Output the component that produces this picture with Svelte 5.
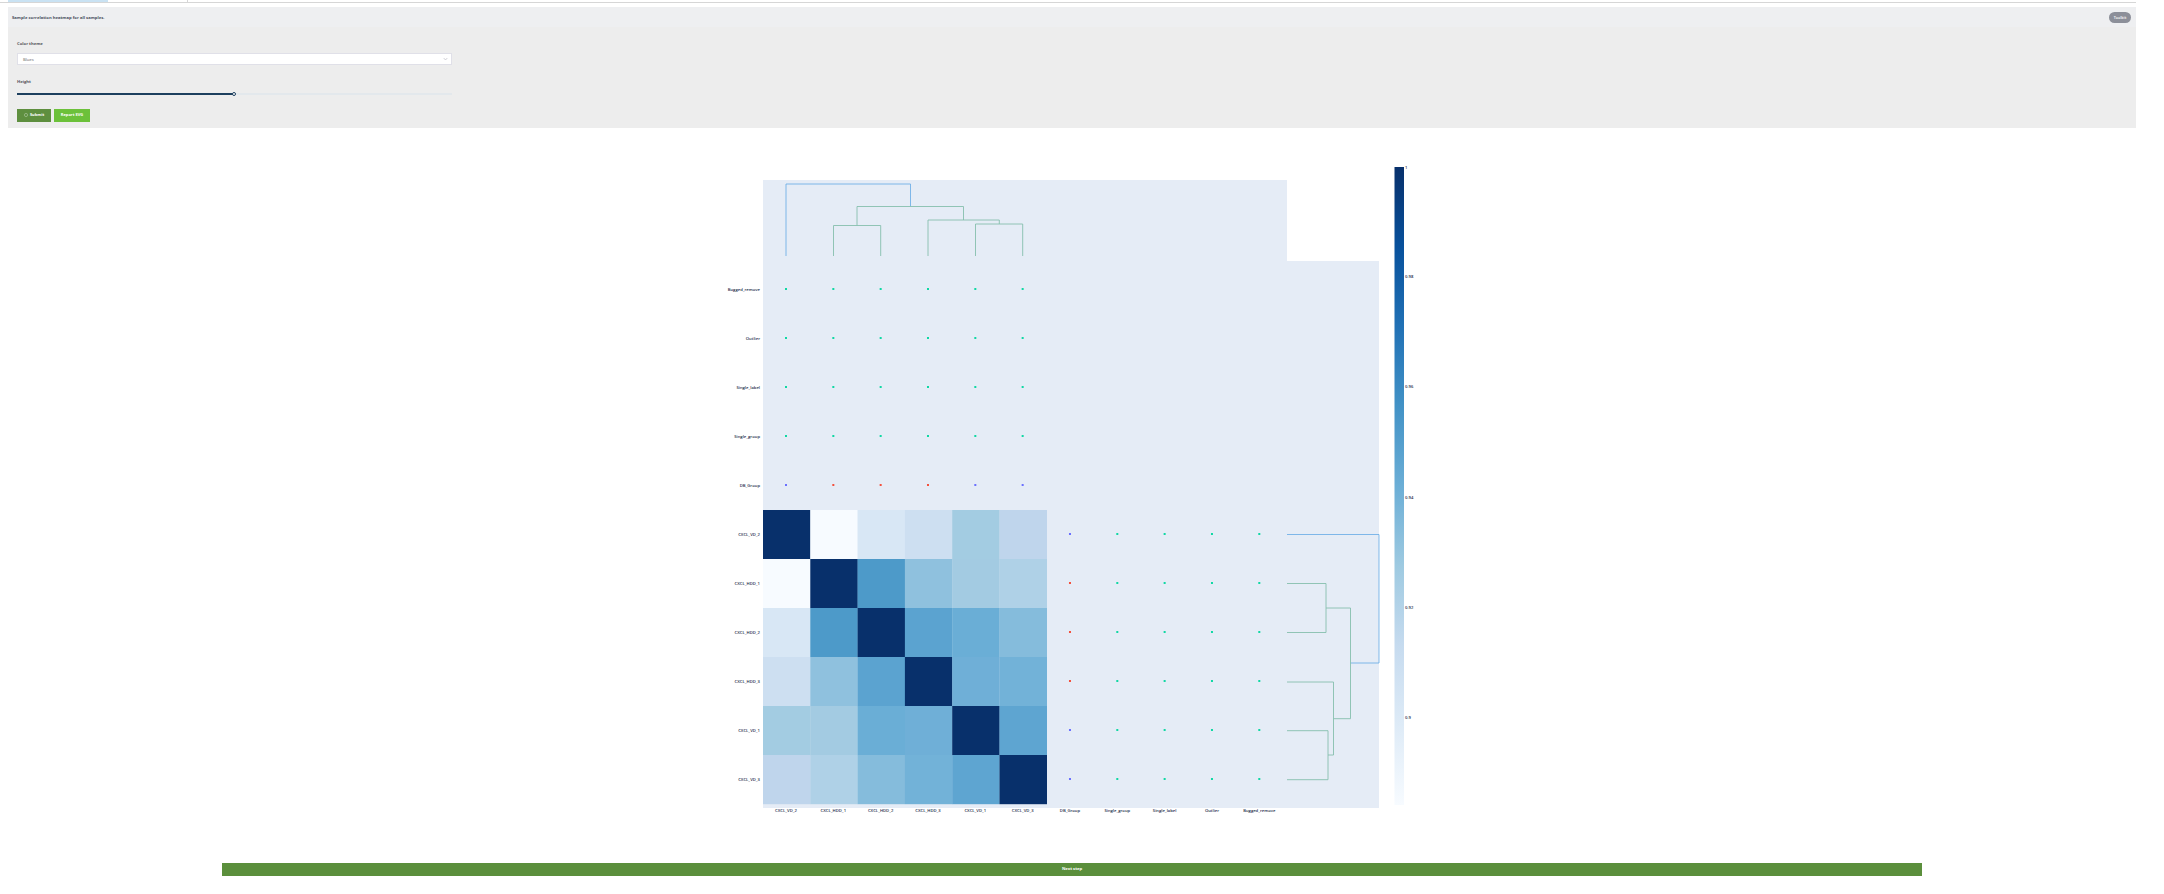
<script>
	const cellW = 47.3;
	const cellH = 49;
	const left = 763;

	const xLabels = ['CXCL_VD_2', 'CXCL_HDD_1', 'CXCL_HDD_2', 'CXCL_HDD_3', 'CXCL_VD_1', 'CXCL_VD_3', 'DB_Group', 'Single_group', 'Single_label', 'Outlier', 'Bugged_remove'];
	const yLabels = ['Bugged_remove', 'Outlier', 'Single_label', 'Single_group', 'DB_Group', 'CXCL_VD_2', 'CXCL_HDD_1', 'CXCL_HDD_2', 'CXCL_HDD_3', 'CXCL_VD_1', 'CXCL_VD_3'];

	const navy = '#08306b';
	const cells = [
		[navy, '#f7fbff', '#d8e7f5', '#cddff1', '#a3cce2', '#bfd5ec'],
		['#f7fbff', navy, '#4d9ac9', '#8fc1de', '#a3cbe2', '#afd1e7'],
		['#d8e7f5', '#4d9ac9', navy, '#5ba3d0', '#6aaed6', '#85bcdc'],
		['#cddff1', '#8fc1de', '#5ba3d0', navy, '#6fafd7', '#72b2d8'],
		['#a3cce2', '#a3cbe2', '#6aaed6', '#6fafd7', navy, '#5ea5d1'],
		['#bfd5ec', '#afd1e7', '#85bcdc', '#72b2d8', '#5ea5d1', navy]
	];

	const teal = '#10d8a4';
	const blue = '#6a70ff';
	const red = '#f4503c';
	const groupColors = [blue, red, red, red, blue, blue];

	// scatter points: samples x metadata, both arms of the matrix
	const dots = [];
	for (let r = 0; r < 5; r++) {
		for (let c = 0; c < 6; c++) {
			dots.push({ x: c, y: r, fill: r === 4 ? groupColors[c] : teal });
		}
	}
	for (let r = 5; r < 11; r++) {
		for (let c = 6; c < 11; c++) {
			dots.push({ x: c, y: r, fill: c === 6 ? groupColors[r - 5] : teal });
		}
	}

	const cx = (i) => 786 + i * 47.33;
	const cy = (i) => 289 + i * 49;

	const ticks = [
		{ y: 167, label: '1' },
		{ y: 276.5, label: '0.98' },
		{ y: 386.5, label: '0.96' },
		{ y: 497, label: '0.94' },
		{ y: 607.5, label: '0.92' },
		{ y: 717.5, label: '0.9' }
	];

	const dendroBlue = [
		'M786 256V184H910.5V206.5',
		'M1287 534.5H1379V663H1350.5'
	];
	const dendroGreen = [
		'M857 225.5V206.5H963.5V220',
		'M833.5 256V225.5H880.7V256',
		'M928 256V220H999.3V224',
		'M975.5 256V224H1022.7V256',
		'M1287 583.5H1326V632.5H1287',
		'M1326 608H1350.5V718.7H1333.5',
		'M1287 682H1333.5V755H1328',
		'M1287 730.7H1328V779.7H1287'
	];
</script>

<div class="page">
	<div class="tabs">
		<div class="tab active"></div>
		<div class="tab"></div>
	</div>

	<section class="panel">
		<header class="panel-head">
			<span>Sample correlation heatmap for all samples.</span>
			<button class="pill">Toolkit</button>
		</header>
		<div class="panel-body">
			<div class="field">
				<span class="label">Color theme</span>
				<div class="select">
					<span>Blues</span>
					<svg width="5" height="4" viewBox="0 0 5 4"><path d="M.7 1l1.8 2 1.8-2" fill="none" stroke="#b4b4bc" stroke-width=".6" /></svg>
				</div>
			</div>
			<div class="field slider-field">
				<span class="label">Height</span>
				<div class="slider">
					<div class="fill"></div>
					<div class="thumb"></div>
				</div>
			</div>
			<div class="actions">
				<button class="btn submit">
					<svg width="4" height="4" viewBox="0 0 10 10"><circle cx="5" cy="5" r="4" fill="none" stroke="#dfe8d8" stroke-width="1" /></svg>
					Submit
				</button>
				<button class="btn report">Report SVG</button>
			</div>
		</div>
	</section>

	<div class="plot">
		<svg width="2164" height="735" viewBox="0 128 2164 735" class="chart">
			<defs>
				<linearGradient id="blues" x1="0" y1="1" x2="0" y2="0">
					<stop offset="0" stop-color="#f7fbff" />
					<stop offset="0.125" stop-color="#deebf7" />
					<stop offset="0.25" stop-color="#c6dbef" />
					<stop offset="0.375" stop-color="#9ecae1" />
					<stop offset="0.5" stop-color="#6baed6" />
					<stop offset="0.625" stop-color="#4292c6" />
					<stop offset="0.75" stop-color="#2171b5" />
					<stop offset="0.875" stop-color="#08519c" />
					<stop offset="1" stop-color="#08306b" />
				</linearGradient>
			</defs>

			<path d="M763 180H1287V261H1379V808H763Z" fill="#e5ecf6" />

			{#each cells as row, r}
				{#each row as fill, c}
					<rect x={left + c * cellW} y={510 + r * cellH} width={cellW + 0.2} height={cellH + 0.2} {fill} />
				{/each}
			{/each}

			{#each dots as d}
				<rect x={cx(d.x) - 1} y={cy(d.y) - 1} width="2" height="2" fill={d.fill} />
			{/each}

			{#each dendroBlue as d}
				<path {d} fill="none" stroke="#63a9e6" stroke-width="0.8" />
			{/each}
			{#each dendroGreen as d}
				<path {d} fill="none" stroke="#86bfae" stroke-width="0.9" />
			{/each}

			{#each yLabels as label, i}
				<text x="760" y={cy(i) + 1.5} text-anchor="end" class="tick">{label}</text>
			{/each}
			{#each xLabels as label, i}
				<text x={cx(i)} y="812" text-anchor="middle" class="tick">{label}</text>
			{/each}

			<rect x="1394.5" y="167" width="9.5" height="638" fill="url(#blues)" />
			{#each ticks as t}
				<text x="1405" y={t.y + 1.5} class="tick">{t.label}</text>
			{/each}
		</svg>
	</div>

	<div class="next-wrap">
		<button class="next">Next step</button>
	</div>
</div>

<style>
	:global(body) {
		margin: 0;
		background: #fff;
		font-family: 'Open Sans', 'Liberation Sans', sans-serif;
	}

	.page {
		width: 2164px;
	}

	.tabs {
		display: flex;
		height: 2px;
		padding-left: 8px;
		margin-right: 28px;
		border-bottom: 1px solid #d6d6d6;
	}

	.tab {
		width: 100px;
		height: 2px;
		flex: 0 0 auto;
	}

	.tab.active {
		background: #c9e2f3;
	}

	.tab:not(.active) {
		width: 79px;
		border-right: 1px solid #d6d6d6;
	}

	.panel {
		margin: 4px 28px 0 8px;
		height: 121px;
		background: #ededed;
	}

	.panel-head {
		height: 20px;
		display: flex;
		align-items: center;
		justify-content: space-between;
		padding: 0 5px 0 4px;
		background: #eeeff1;
		font-size: 4.2px;
		font-weight: 700;
		color: #4a4f5e;
	}

	.pill {
		width: 22px;
		height: 11px;
		border: 0;
		border-radius: 6px;
		padding: 0;
		background: #8c8f99;
		color: #eee;
		font: 700 3.6px 'Open Sans', sans-serif;
	}

	.panel-body {
		padding: 14px 9px 0;
		width: 435px;
	}

	.field {
		display: flex;
		flex-direction: column;
	}

	.slider-field {
		margin-top: 14px;
	}

	.label {
		font-size: 4.2px;
		font-weight: 700;
		line-height: 6px;
		color: #55555c;
	}

	.select {
		box-sizing: border-box;
		height: 12px;
		margin-top: 6px;
		padding: 0 3px 0 5px;
		display: flex;
		align-items: center;
		justify-content: space-between;
		background: #fff;
		border: 1px solid #e0e0e8;
		font-size: 4.2px;
		color: #666;
	}

	.slider {
		position: relative;
		height: 2px;
		margin-top: 8px;
		background: #e3e8ec;
	}

	.fill {
		width: 217px;
		height: 100%;
		background: #1d3f5e;
	}

	.thumb {
		position: absolute;
		left: 215px;
		top: -1px;
		box-sizing: border-box;
		width: 4px;
		height: 4px;
		border-radius: 50%;
		border: 1px solid #1d3f5e;
		background: #fff;
	}

	.actions {
		display: flex;
		gap: 3px;
		margin-top: 14px;
	}

	.btn {
		height: 13px;
		border: 0;
		padding: 0 0 2px;
		display: flex;
		align-items: center;
		justify-content: center;
		gap: 2px;
		color: #fff;
		font: 700 4px 'Open Sans', sans-serif;
	}

	.submit {
		width: 34px;
		background: #5e8f3f;
	}

	.report {
		width: 36px;
		background: #6cc13a;
	}

	.plot {
		height: 735px;
	}

	.chart {
		display: block;
	}

	.tick {
		font-family: 'Open Sans', 'Liberation Sans', sans-serif;
		font-size: 4.2px;
		font-weight: 600;
		fill: #1c2c4a;
	}

	.next-wrap {
		padding: 0 242px 0 222px;
	}

	.next {
		display: block;
		width: 100%;
		height: 13px;
		border: 0;
		padding: 0 0 3px;
		background: #5b8f3c;
		color: #fff;
		font: 700 4.2px 'Open Sans', sans-serif;
	}
</style>
